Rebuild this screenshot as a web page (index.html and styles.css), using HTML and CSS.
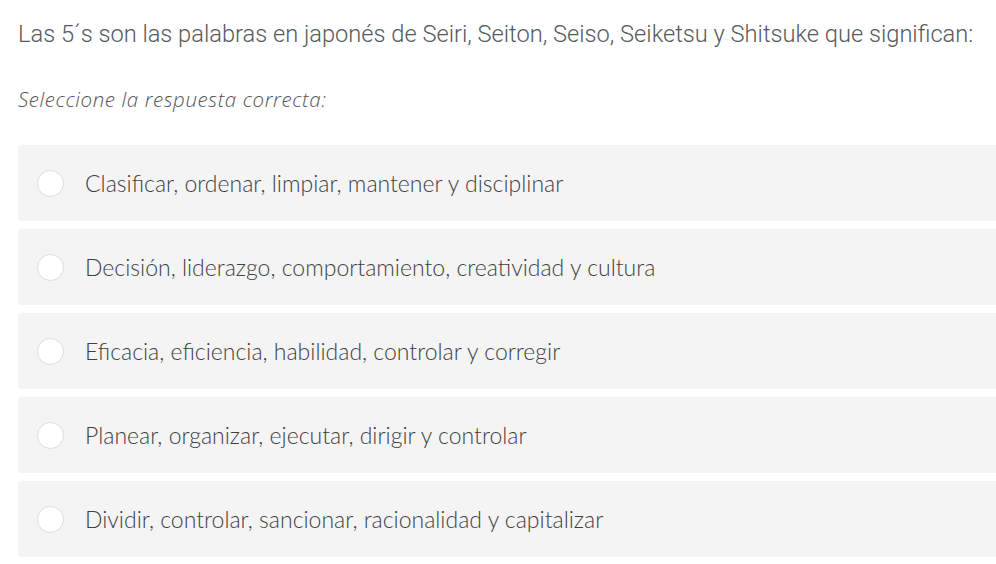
FILE: index.html
```html
<!DOCTYPE html>
<html lang="es">
<head>
<meta charset="utf-8">
<link rel="stylesheet" href="styles.css">
</head>
<body>
<div class="quiz">
  <p class="question">Las 5´s son las palabras en japonés de Seiri, Seiton, Seiso, Seiketsu y Shitsuke que significan:</p>
  <p class="hint">Seleccione la respuesta correcta:</p>
  <div class="options">
    <label class="option"><span class="radio"></span><span class="text">Clasificar, ordenar, limpiar, mantener y disciplinar</span></label>
    <label class="option"><span class="radio"></span><span class="text">Decisión, liderazgo, comportamiento, creatividad y cultura</span></label>
    <label class="option"><span class="radio"></span><span class="text">Eficacia, eficiencia, habilidad, controlar y corregir</span></label>
    <label class="option"><span class="radio"></span><span class="text">Planear, organizar, ejecutar, dirigir y controlar</span></label>
    <label class="option"><span class="radio"></span><span class="text">Dividir, controlar, sancionar, racionalidad y capitalizar</span></label>
  </div>
</div>
</body>
</html>
```
FILE: styles.css
```css
html, body {
  margin: 0;
  padding: 0;
  background: #ffffff;
}
.quiz {
  padding: 19px 0 0 18px;
}
.question {
  margin: 0;
  font-family: Roboto, "Liberation Sans", sans-serif;
  font-weight: 300;
  font-size: 23.65px;
  line-height: 30px;
  color: #555a60;
  white-space: nowrap;
}
.hint {
  margin: 36px 0 0 0;
  font-family: "Open Sans", "Liberation Sans", sans-serif;
  font-style: italic;
  font-weight: 300;
  font-size: 20.5px;
  letter-spacing: 0.6px;
  line-height: 28px;
  color: #555;
}
.options {
  margin-top: 32px;
  display: flex;
  flex-direction: column;
  gap: 8px;
}
.option {
  display: flex;
  align-items: center;
  height: 76px;
  background: #f4f4f4;
  border-radius: 3px 0 0 3px;
  padding-left: 19px;
}
.radio {
  width: 27px;
  height: 27px;
  box-sizing: border-box;
  border-radius: 50%;
  border: 1px solid #dcdcdc;
  background: #fff;
  flex: none;
}
.text {
  margin-left: 21px;
  font-family: Lato, "Liberation Sans", sans-serif;
  font-weight: 300;
  font-size: 23px;
  color: #3f3f3f;
}
```
